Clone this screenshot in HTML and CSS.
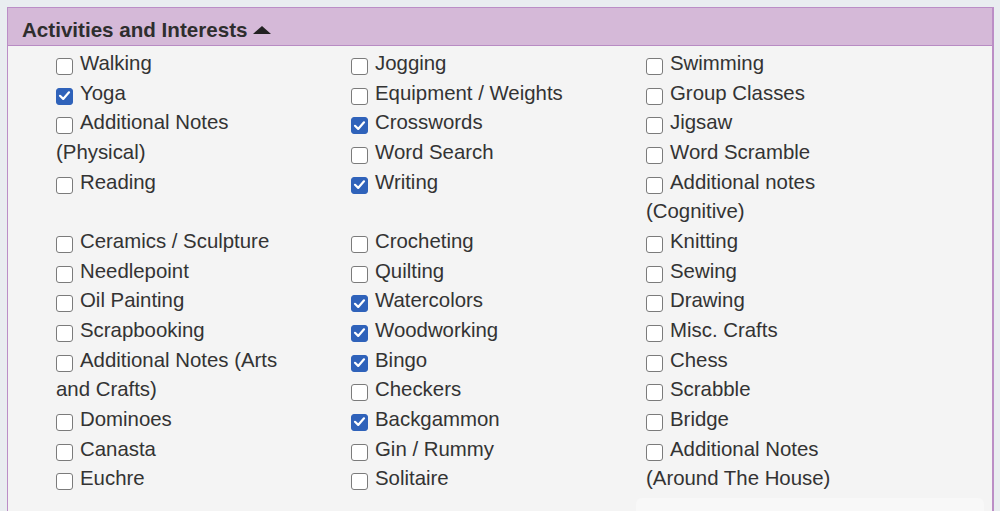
FILE: index.html
```html
<!DOCTYPE html>
<html lang="en">
<head>
<meta charset="utf-8">
<title>Activities and Interests</title>
<link rel="stylesheet" href="styles.css">
</head>
<body>
<div class="panel">
  <div class="panel-head">
    <span class="title">Activities and Interests</span><svg class="caret" width="18" height="8" viewBox="0 0 18 8"><polygon points="0,8 9,0 18,8" fill="#222"/></svg>
  </div>
  <div class="panel-body">
    <div class="section">
      <div class="col">
        <div class="item"><span class="cb"></span>Walking</div>
        <div class="item"><span class="cb on"><svg viewBox="0 0 17 17"><path d="M4 8.8l3.2 3.1 5.8-6.6"/></svg></span>Yoga</div>
        <div class="item"><span class="cb"></span>Additional Notes (Physical)</div>
        <div class="item"><span class="cb"></span>Reading</div>
      </div>
      <div class="col">
        <div class="item"><span class="cb"></span>Jogging</div>
        <div class="item"><span class="cb"></span>Equipment / Weights</div>
        <div class="item"><span class="cb on"><svg viewBox="0 0 17 17"><path d="M4 8.8l3.2 3.1 5.8-6.6"/></svg></span>Crosswords</div>
        <div class="item"><span class="cb"></span>Word Search</div>
        <div class="item"><span class="cb on"><svg viewBox="0 0 17 17"><path d="M4 8.8l3.2 3.1 5.8-6.6"/></svg></span>Writing</div>
      </div>
      <div class="col">
        <div class="item"><span class="cb"></span>Swimming</div>
        <div class="item"><span class="cb"></span>Group Classes</div>
        <div class="item"><span class="cb"></span>Jigsaw</div>
        <div class="item"><span class="cb"></span>Word Scramble</div>
        <div class="item"><span class="cb"></span>Additional notes (Cognitive)</div>
      </div>
    </div>
    <div class="section">
      <div class="col">
        <div class="item"><span class="cb"></span>Ceramics / Sculpture</div>
        <div class="item"><span class="cb"></span>Needlepoint</div>
        <div class="item"><span class="cb"></span>Oil Painting</div>
        <div class="item"><span class="cb"></span>Scrapbooking</div>
        <div class="item"><span class="cb"></span>Additional Notes (Arts and Crafts)</div>
        <div class="item"><span class="cb"></span>Dominoes</div>
        <div class="item"><span class="cb"></span>Canasta</div>
        <div class="item"><span class="cb"></span>Euchre</div>
      </div>
      <div class="col">
        <div class="item"><span class="cb"></span>Crocheting</div>
        <div class="item"><span class="cb"></span>Quilting</div>
        <div class="item"><span class="cb on"><svg viewBox="0 0 17 17"><path d="M4 8.8l3.2 3.1 5.8-6.6"/></svg></span>Watercolors</div>
        <div class="item"><span class="cb on"><svg viewBox="0 0 17 17"><path d="M4 8.8l3.2 3.1 5.8-6.6"/></svg></span>Woodworking</div>
        <div class="item"><span class="cb on"><svg viewBox="0 0 17 17"><path d="M4 8.8l3.2 3.1 5.8-6.6"/></svg></span>Bingo</div>
        <div class="item"><span class="cb"></span>Checkers</div>
        <div class="item"><span class="cb on"><svg viewBox="0 0 17 17"><path d="M4 8.8l3.2 3.1 5.8-6.6"/></svg></span>Backgammon</div>
        <div class="item"><span class="cb"></span>Gin / Rummy</div>
        <div class="item"><span class="cb"></span>Solitaire</div>
      </div>
      <div class="col">
        <div class="item"><span class="cb"></span>Knitting</div>
        <div class="item"><span class="cb"></span>Sewing</div>
        <div class="item"><span class="cb"></span>Drawing</div>
        <div class="item"><span class="cb"></span>Misc. Crafts</div>
        <div class="item"><span class="cb"></span>Chess</div>
        <div class="item"><span class="cb"></span>Scrabble</div>
        <div class="item"><span class="cb"></span>Bridge</div>
        <div class="item"><span class="cb"></span>Additional Notes (Around The House)</div>
      </div>
    </div>
    <div class="notes"></div>
  </div>
</div>
</body>
</html>
```
FILE: styles.css
```css
html, body {
  margin: 0;
  padding: 0;
}
body {
  background: #e9edf0;
  font-family: "Liberation Sans", Arial, sans-serif;
  color: #333;
}
.panel {
  margin: 7px 6px 0 7px;
  border: 1px solid #bb8ec6;
  border-right-width: 2px;
  border-bottom: none;
  background: #f4f4f4;
}
.panel-head {
  background: #d5b9d8;
  border-bottom: 1px solid #b88bc3;
  height: 37px;
  box-sizing: content-box;
  padding: 0 14px;
}
.title {
  display: inline-block;
  padding-top: 10px;
  line-height: 23px;
  font-size: 20.6px;
  font-weight: bold;
  color: #2e2e2e;
}
.caret {
  margin-left: 6px;
  vertical-align: 3px;
}
.panel-body {
  padding: 3px 0 0 48px;
  font-size: 20.4px;
  line-height: 29.65px;
}
.section {
  display: grid;
  grid-template-columns: repeat(3, 295px);
  align-items: start;
}
.col {
  display: flex;
  flex-direction: column;
}
.item {
  width: 242px;
}
.cb {
  display: inline-block;
  box-sizing: border-box;
  width: 17px;
  height: 17px;
  border: 1.5px solid #7b7b7b;
  border-radius: 3px;
  background: #fff;
  vertical-align: -5px;
  margin-right: 7px;
}
.cb.on {
  background: #2f62ba;
  border-color: #2f62ba;
}
.cb svg {
  display: block;
  width: 17px;
  height: 17px;
  margin: -1.5px;
}
.cb path {
  fill: none;
  stroke: #fff;
  stroke-width: 2.2;
  stroke-linecap: round;
  stroke-linejoin: round;
}
.notes {
  margin: 4px 0 0 580px;
  width: 348px;
  height: 24px;
  background: #f8f8f8;
  border-radius: 6px 6px 0 0;
}
```
